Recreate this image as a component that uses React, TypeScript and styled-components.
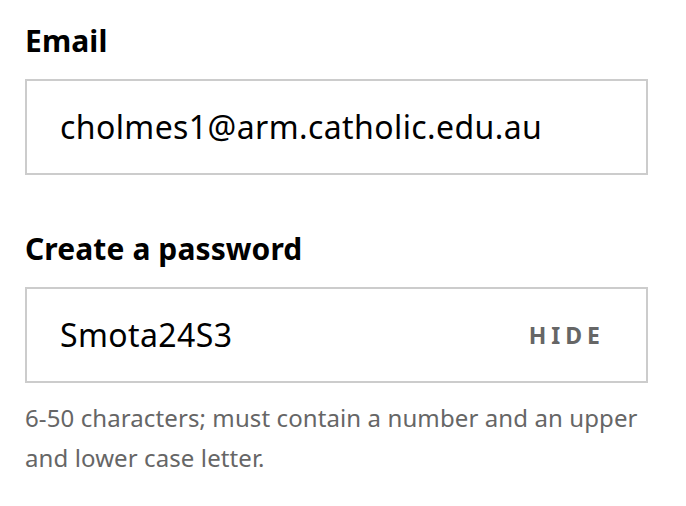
import { createGlobalStyle } from "styled-components";
import styled from "styled-components";

const Global = createGlobalStyle`
  body {
    margin: 0;
    background: #fff;
    font-family: "Noto Sans", "Open Sans", sans-serif;
    color: #000;
  }
`;

const Form = styled.div`
  padding: 22px 38px 0 25px;
  display: flex;
  flex-direction: column;
`;

const Field = styled.div<{ $gap?: number }>`
  display: flex;
  flex-direction: column;
  margin-bottom: ${(p) => p.$gap ?? 0}px;
`;

const Label = styled.label`
  font-size: 30px;
  font-weight: 700;
  line-height: 38px;
  letter-spacing: 0.1px;
  margin-bottom: 19px;
`;

const InputBox = styled.div`
  height: 92px;
  border: 2px solid #cccccc;
  display: flex;
  align-items: center;
  justify-content: space-between;
  padding: 0 46px 0 33px;
`;

const Value = styled.span`
  font-size: 32px;
  letter-spacing: 0.4px;
  padding-bottom: 2px;
`;

const Toggle = styled.button`
  border: none;
  background: none;
  padding: 0;
  font-family: inherit;
  font-size: 23px;
  font-weight: 700;
  letter-spacing: 5px;
  margin-right: -5px;
  color: #666666;
  cursor: pointer;
`;

const Hint = styled.p`
  margin: 15px 0 0;
  font-size: 24px;
  line-height: 40px;
  letter-spacing: 0.1px;
  color: #666666;
`;

export default function App() {
  return (
    <>
      <Global />
      <Form>
        <Field $gap={55}>
          <Label>Email</Label>
          <InputBox>
            <Value>cholmes1@arm.catholic.edu.au</Value>
          </InputBox>
        </Field>
        <Field>
          <Label>Create a password</Label>
          <InputBox>
            <Value>Smota24S3</Value>
            <Toggle type="button">HIDE</Toggle>
          </InputBox>
          <Hint>
            6-50 characters; must contain a number and an upper
            <br />
            and lower case letter.
          </Hint>
        </Field>
      </Form>
    </>
  );
}
